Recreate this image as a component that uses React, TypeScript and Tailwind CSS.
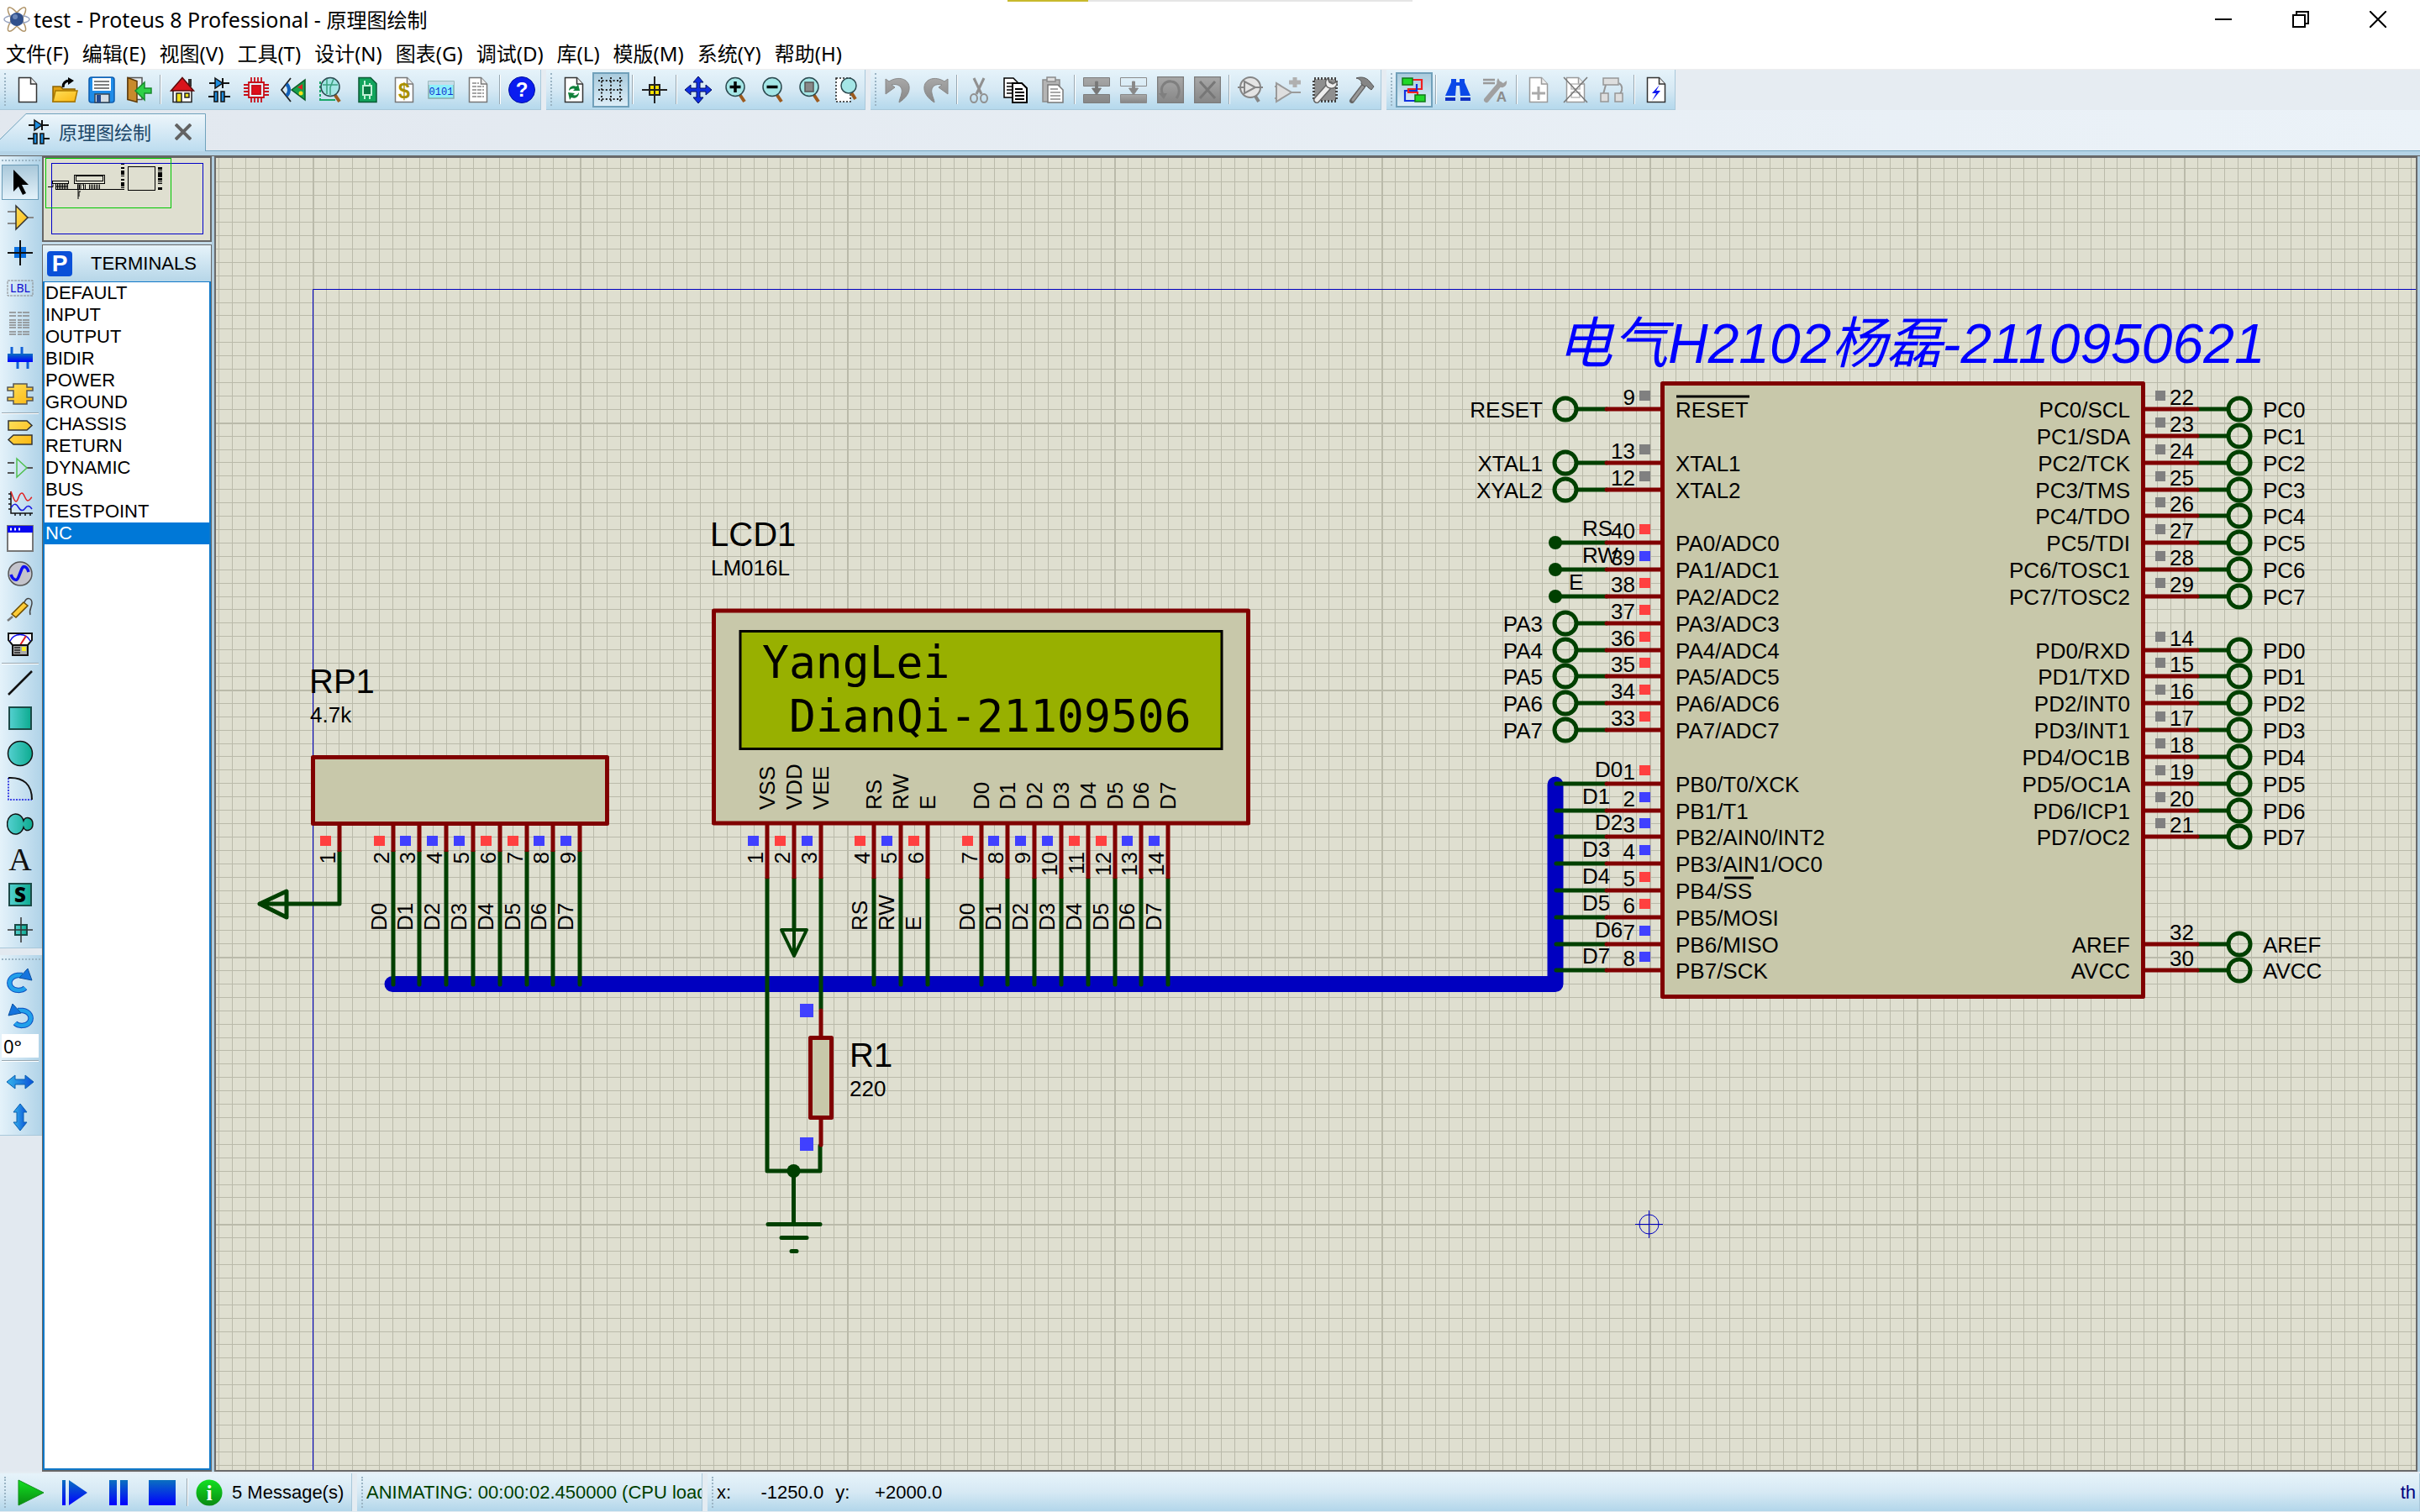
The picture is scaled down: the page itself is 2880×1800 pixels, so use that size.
import React from "react";

/* ---------- shared helpers ---------- */

const UI = "font-['Noto_Sans','Noto_Sans_CJK_SC',sans-serif]";
const ARIAL = "font-['Liberation_Sans','Noto_Sans_CJK_SC',sans-serif]";

type Kids = { children?: React.ReactNode };

const Svg = ({ children }: Kids) => (
  <svg viewBox="0 0 32 32" className="size-8" fill="none" strokeWidth={1.5} aria-hidden="true">
    {children}
  </svg>
);

const Page = ({ stroke = "#333", fill = "#fff" }: { stroke?: string; fill?: string }) => (
  <g>
    <path d="M5.500 1.500h14l7 7.500v21.500h-21z" fill={fill} stroke={stroke} />
    <path d="M19.500 1.500v7.500h7" fill="#eee" stroke={stroke} />
  </g>
);

const Lens = ({ children }: Kids) => (
  <g>
    <path d="M21 21l6 9" stroke="#9c5a1e" strokeWidth={4} />
    <circle cx="16" cy="12.500" r="11" fill="#a4e6e6" stroke="#2c4a50" />
    {children}
  </g>
);

const Grads = () => (
  <svg className="absolute size-0" aria-hidden="true">
    <defs>
      <linearGradient id="teal"><stop offset="0" stopColor="#55d0d0" /><stop offset="1" stopColor="#0cab90" /></linearGradient>
      <linearGradient id="gold" x2="1" y2="1"><stop offset="0" stopColor="#ffdf5a" /><stop offset="1" stopColor="#fbb812" /></linearGradient>
      <linearGradient id="blueV" x2="0" y2="1"><stop offset="0" stopColor="#0a70c0" /><stop offset="1" stopColor="#0000ff" /></linearGradient>
      <linearGradient id="greenV" x2="0" y2="1"><stop offset="0" stopColor="#12e022" /><stop offset="1" stopColor="#0a8a12" /></linearGradient>
      <linearGradient id="sky"><stop offset="0" stopColor="#35b4ea" /><stop offset="1" stopColor="#0a50d8" /></linearGradient>
      <linearGradient id="grayV" x2="0" y2="1"><stop offset="0" stopColor="#a8a8a8" /><stop offset="1" stopColor="#868686" /></linearGradient>
      <linearGradient id="tab" x2="0" y2="1"><stop offset="0" stopColor="#eef6fb" /><stop offset="1" stopColor="#bcdcef" /></linearGradient>
    </defs>
  </svg>
);

/* ---------- toolbar icons ---------- */

const DiodeCap = () => (
  <g stroke="#111" strokeWidth={2}>
    <path d="M4 8h24M20 2v12" />
    <path d="M11 2l9 6-9 6z" fill="#1c8de0" strokeWidth={1.5} />
    <path d="M3 24h7M22 24h7" />
    <path d="M10 18h4v12h-4zM18 18h4v12h-4z" fill="#1c8de0" strokeWidth={1.5} />
  </g>
);

const Undo = () => (
  <path d="M1 3l0 18 11-8-4-3c7-2 14 2 12 10-1 5-3 8-3 11 8-5 13-12 12-19C28 3 16-1 5 6z" fill="url(#grayV)" stroke="#888" strokeWidth={1} />
);

const icons: Record<string, React.ReactNode> = {
  new: <Page />,
  open: (
    <g>
      <path d="M2 12h9l3 3h14v15H2z" fill="#e0a010" stroke="#8a6200" />
      <path d="M2 30l3-13h26l-3 13z" fill="url(#gold)" stroke="#a87800" />
      <path d="M14 13c0-6 3-8 8-8" stroke="#000" strokeWidth={3} />
      <path d="M20 1l7 4-7 5z" fill="#000" />
    </g>
  ),
  save: (
    <g>
      <rect x="1" y="1" width="30" height="30" rx="3" fill="#1e8ce8" stroke="#0d5cae" />
      <rect x="5" y="2" width="22" height="15" fill="#fff" />
      <path d="M7 6h18M7 10h18M7 14h18" stroke="#555" />
      <rect x="8" y="21" width="17" height="10" fill="#d4dde4" stroke="#345" />
      <rect x="10" y="22" width="5" height="9" fill="#234a90" />
    </g>
  ),
  exit: (
    <g>
      <path d="M3 1.500h17v26H3z" fill="#e9eef2" stroke="#555" />
      <path d="M3 1.500l11 4v25l-11-3z" fill="#c88a2c" stroke="#5e3a08" />
      <path d="M31 20h-8v8L12 17 23 7v7h8z" fill="#2fd048" stroke="#18892c" />
    </g>
  ),
  home: (
    <g>
      <path d="M23 3h4v9h-4z" fill="#333" />
      <path d="M5 15h22v15.500H5z" fill="#fff" stroke="#222" />
      <path d="M16 1.500L29.500 17h-27z" fill="#d8141c" stroke="#5c0a0a" />
      <path d="M9 20h6v10.500H9z" fill="#f4e21a" stroke="#222" />
      <path d="M19 20h5v5h-5z" fill="#f4e21a" stroke="#222" />
    </g>
  ),
  schematic: <DiodeCap />,
  chip: (
    <g stroke="#c8101a" strokeWidth={1.800}>
      <path d="M10 1v30M14 1v30M18 1v30M22 1v30M1 10h30M1 14h30M1 18h30M1 22h30" />
      <path d="M7 7h18v18H7z" fill="#e6f2f8" />
      <path d="M11 11h10v10H11z" fill="#e0101a" />
    </g>
  ),
  viewer: (
    <g>
      <path d="M13 2L2 16l11 14" stroke="#222" strokeWidth={1.800} />
      <path d="M8 9c4 4 4 10 0 14" stroke="#1260b8" strokeWidth={4} />
      <path d="M14 16L30 4v24z" fill="#17a04a" stroke="#0a5a28" />
      <path d="M21 13l6-4v7z" fill="#e02020" />
      <circle cx="25" cy="20" r="2.500" fill="#f4e21a" />
    </g>
  ),
  gerber: (
    <g>
      <path d="M4 6v22h16M4 28h18" stroke="#1aa86a" strokeDasharray="3 2" strokeWidth={2} />
      <Lens><path d="M7 10h18M12 3v18M20 3l-4 10v9" stroke="#3aa080" /></Lens>
    </g>
  ),
  pcb: (
    <g>
      <path d="M6 1.500h14l7 7v22H6z" fill="#12a45c" stroke="#0b5a34" />
      <path d="M11 11h10v11H11z" fill="#0b7a44" stroke="#bff0d4" strokeWidth={2} />
      <path d="M13 11V5M19 11V8M13 22v5M19 22v5" stroke="#bff0d4" strokeWidth={2} />
    </g>
  ),
  bom: (
    <g>
      <Page stroke="#777" />
      <text x="16" y="26" fontSize="25" fontWeight="700" fill="#a89000" textAnchor="middle" className={ARIAL}>$</text>
    </g>
  ),
  code: (
    <g>
      <rect x="1" y="6" width="30" height="20" fill="#8ff0fa" stroke="#8aa" />
      <rect x="1" y="6" width="30" height="4" fill="#c8dce8" />
      <text x="16" y="22" fontSize="12" fill="#1030d0" textAnchor="middle" className="font-['Liberation_Mono',monospace]">0101</text>
    </g>
  ),
  notes: (
    <g>
      <Page stroke="#777" />
      <path d="M9 8h8M9 12h14M9 16h14M9 20h14M9 24h14" stroke="#888" strokeDasharray="5 1" />
    </g>
  ),
  help: (
    <g>
      <circle cx="16" cy="16" r="15.500" fill="#0a1cf0" stroke="#0010a0" strokeWidth={1} />
      <text x="16" y="24" fontSize="24" fontWeight="700" fill="#fff" textAnchor="middle" className={ARIAL}>?</text>
    </g>
  ),
  refresh: (
    <g>
      <Page />
      <path d="M10 17c0-5 5-7 9-5l2-3 2 8-8 0 2-2c-3-1-5 0-7 2zM22 19c0 6-5 8-9 6l-2 3-2-9 8 1-2 2c3 1 5 0 7-3z" fill="#10803a" />
    </g>
  ),
  grid: (
    <path d="M1 5h30M1 16h30M1 27h30M5 1v30M16 1v30M27 1v30" stroke="#222" strokeDasharray="2 2.400" strokeWidth={2} />
  ),
  origin: (
    <g stroke="#222" strokeWidth={2}>
      <rect x="10" y="10" width="12" height="12" fill="#f8e000" />
      <path d="M16 0v32M1 16h30" />
    </g>
  ),
  pan: (
    <path d="M16 0l6 7h-4v7h7v-4l7 6-7 6v-4h-7v7h4l-6 7-6-7h4v-7H7v4l-7-6 7-6v4h7V7h-4z" fill="#1030e0" stroke="#000c60" strokeWidth={1} />
  ),
  zoomIn: <Lens><path d="M16 6v13M9.500 12.500h13" stroke="#000" strokeWidth={3.500} /></Lens>,
  zoomOut: <Lens><path d="M9.500 12.500h13" stroke="#000" strokeWidth={3.500} /></Lens>,
  zoomAll: <Lens><rect x="11" y="7" width="10" height="11" fill="#888" stroke="#555" /></Lens>,
  zoomArea: (
    <g>
      <path d="M4 2h17v28H4z" fill="#fff" stroke="#222" strokeDasharray="2 2" />
      <path d="M22 19l5 8" stroke="#9c5a1e" strokeWidth={4} />
      <circle cx="19" cy="11" r="9" fill="#a4e6e6" stroke="#2c4a50" />
    </g>
  ),
  undo: <Undo />,
  redo: <g transform="matrix(-1 0 0 1 32 0)"><Undo /></g>,
  cut: (
    <g stroke="#909090" strokeWidth={2}>
      <path d="M10 2l9 19M22 2l-9 19" strokeWidth={3} />
      <ellipse cx="10" cy="26" rx="4" ry="5" />
      <ellipse cx="22" cy="26" rx="4" ry="5" />
    </g>
  ),
  copy: (
    <g stroke="#000" fill="#fff">
      <path d="M2 2h11l5 5v18H2z" />
      <path d="M5 8h8M5 12h8M5 16h8M5 20h8" />
      <path d="M12 8h11l6 6v17H12z" strokeWidth={2} />
      <path d="M15 15h9M15 19h11M15 23h11M15 27h11" strokeWidth={2} />
    </g>
  ),
  paste: (
    <g stroke="#8a8a8a">
      <rect x="4" y="4" width="20" height="26" fill="#b4b4b4" />
      <rect x="9" y="1" width="10" height="5" fill="#ddd" />
      <path d="M10 10h12l6 6v15H10z" fill="#fff" stroke="#777" />
      <path d="M13 15h9M13 19h12M13 23h12M13 27h12" />
    </g>
  ),
  blockCopy: (
    <g fill="url(#grayV)" stroke="#7c7c7c" strokeWidth={1}>
      <path d="M.500 1.500h31v10h-31zM.500 21.500h31v10h-31z" />
      <path d="M14.500 6h3v8h4l-5.500 8-5.500-8h4z" fill="#777" />
    </g>
  ),
  blockMove: (
    <g fill="url(#grayV)" stroke="#8a8a8a" strokeWidth={1}>
      <path d="M.500 1.500h31v10h-31z" fill="none" />
      <path d="M.500 21.500h31v10h-31z" />
      <path d="M14.500 6h3v8h4l-5.500 8-5.500-8h4z" fill="#888" />
    </g>
  ),
  blockRotate: (
    <g>
      <rect x=".500" y=".500" width="31" height="31" fill="url(#grayV)" stroke="#7c7c7c" />
      <path d="M7 22C2 12 10 5 17 6c9 1 12 12 6 20" stroke="#7f7f7f" strokeWidth={3} />
      <path d="M2 20h10l-4 7z" fill="#7f7f7f" />
    </g>
  ),
  blockDelete: (
    <g>
      <rect x=".500" y=".500" width="31" height="31" fill="url(#grayV)" stroke="#7c7c7c" />
      <path d="M7 6l18 20M25 6L7 26" stroke="#777" strokeWidth={3} />
    </g>
  ),
  pick: (
    <g stroke="#858585" strokeWidth={2}>
      <path d="M20 22l5 8" strokeWidth={4} />
      <circle cx="15" cy="13" r="12" fill="#e4e4e4" />
      <path d="M0 13h8M8 6v14l13-7zM21 13h9" />
    </g>
  ),
  make: (
    <g stroke="#9a9a9a" strokeWidth={2}>
      <path d="M2 8v22l18-11zM0 12h2M0 26h2M20 19h11" fill="#dedede" />
      <path d="M24 1v12M17 7h14" strokeWidth={5} stroke="#b0b0b0" />
    </g>
  ),
  pack: (
    <g>
      <path d="M3 3h26v26H3z" fill="#a8a8a8" stroke="#444" strokeWidth={4} strokeDasharray="2 2" />
      <path d="M4 4h24v24H4z" fill="#8f8f8f" />
      <path d="M22 10L6 28" stroke="#666" strokeWidth={8} strokeLinecap="round" />
      <path d="M22 10L6 28" stroke="#eee" strokeWidth={5} strokeLinecap="round" />
      <path d="M19 2c-4 4-3 11 3 12s9-4 8-8l-5 3-4-2z" fill="#eee" stroke="#666" />
    </g>
  ),
  decompose: (
    <g>
      <path d="M17 12L4 29" stroke="#666" strokeWidth={6} strokeLinecap="round" />
      <path d="M17 12L5 28" stroke="#999" strokeWidth={3} strokeLinecap="round" />
      <path d="M9 2c6-2 12-1 16 4l5 6-3 4-4-3c-1-2-2-2-4-1l-4-3c1-4-2-6-6-7z" fill="#858585" stroke="#555" strokeWidth={1} />
    </g>
  ),
  autoroute: (
    <g strokeWidth={2.200}>
      <path d="M13 4h12v11H9v4" stroke="#f02020" />
      <path d="M19 9v8H5v12h12" stroke="#1030e0" />
      <path d="M9 15v4h11v3" stroke="#f02020" />
      <rect x="2" y="2" width="12" height="8" fill="#20d828" stroke="#117a18" strokeWidth={1.500} />
      <rect x="17" y="22" width="12" height="8" fill="#20d828" stroke="#117a18" strokeWidth={1.500} />
    </g>
  ),
  find: (
    <g fill="#0a48e8">
      <path d="M8 3h6v4h4V3h6v4l7 16H19l-1-12h-4l-1 12H1L8 7z" />
      <path d="M1 25h12v4H1zM19 25h12v4H19z" fill="#1030c0" />
    </g>
  ),
  property: (
    <g>
      <path d="M2 4h14M2 8h14" stroke="#999" strokeWidth={2.500} />
      <path d="M22 9L6 28" stroke="#a0a0a0" strokeWidth={6} strokeLinecap="round" />
      <path d="M20 2c-3 4-2 10 3 11s8-4 7-8l-4 3-4-2z" fill="#a0a0a0" />
      <text x="24" y="30" fontSize="17" fontWeight="700" fill="#8c8c8c" textAnchor="middle" className={ARIAL}>A</text>
    </g>
  ),
  addSheet: (
    <g>
      <Page stroke="#9a9a9a" />
      <path d="M16 12v16M8 20h16" stroke="#aaa" strokeWidth={3} />
    </g>
  ),
  removeSheet: (
    <g>
      <Page stroke="#9a9a9a" />
      <path d="M11 9h10v6H11zM11 19h10v6H11z" stroke="#bbb" />
      <path d="M2 1l28 30M30 1L2 31" stroke="#777" />
    </g>
  ),
  hierarchy: (
    <g stroke="#969696" fill="#dedede">
      <path d="M8 10L5 21M24 8c4 3 4 8 1 13" fill="none" strokeWidth={2} />
      <rect x="5" y="2" width="18" height="8" />
      <rect x="2" y="20" width="9" height="10" />
      <rect x="19" y="20" width="9" height="10" />
    </g>
  ),
  erc: (
    <g>
      <Page />
      <path d="M20 10l-9 10h5l-5 9 10-12h-5z" fill="#1018f0" />
    </g>
  ),
};

type Tool = { id: string; label: string; active?: boolean; off?: boolean } | "sep";
const t = (id: string, label: string, active = false, off = false): Tool => ({ id, label, active, off });

const toolbarGroups: Tool[][] = [
  [
    t("new", "New"), t("open", "Open"), t("save", "Save"), t("exit", "Close"), "sep",
    t("home", "Home page"), t("schematic", "Schematic capture"), t("chip", "PCB layout"), t("viewer", "3D visualizer"),
    t("gerber", "Gerber viewer"), t("pcb", "Design explorer"), t("bom", "Bill of materials"), t("code", "Source code"),
    t("notes", "Project notes"), "sep", t("help", "Help"),
  ],
  [
    t("refresh", "Redraw"), t("grid", "Toggle grid", true), "sep", t("origin", "Origin"), "sep",
    t("pan", "Pan"), t("zoomIn", "Zoom in"), t("zoomOut", "Zoom out"), t("zoomAll", "Zoom all"), t("zoomArea", "Zoom area"),
  ],
  [
    t("undo", "Undo", false, true), t("redo", "Redo", false, true), "sep",
    t("cut", "Cut", false, true), t("copy", "Copy"), t("paste", "Paste", false, true), "sep",
    t("blockCopy", "Block copy", false, true), t("blockMove", "Block move", false, true),
    t("blockRotate", "Block rotate", false, true), t("blockDelete", "Block delete", false, true), "sep",
    t("pick", "Pick parts", false, true), t("make", "Make device", false, true),
    t("pack", "Packaging tool", false, true), t("decompose", "Decompose", false, true),
  ],
  [
    t("autoroute", "Wire autorouter", true), "sep", t("find", "Search"), t("property", "Property assignment", false, true), "sep",
    t("addSheet", "New sheet", false, true), t("removeSheet", "Remove sheet", false, true), t("hierarchy", "Exit to parent", false, true), "sep",
    t("erc", "Electrical rules check"),
  ],
];

const Grip = () => (
  <span className="flex w-[11px] shrink-0 justify-center self-stretch py-1">
    <span className="border-l-2 border-dotted border-[#9ab4c4]" />
  </span>
);

const HGrip = () => <span className="mx-0.5 my-1 block border-t-2 border-dotted border-[#9ab4c4]" />;

const VSep = () => (
  <span className="flex w-2 shrink-0 justify-center self-stretch py-1.5">
    <span className="w-0.5 border-l border-[#98a8b2] bg-white" />
  </span>
);

const Toolbar = () => (
  <div className="flex h-12 shrink-0 gap-1.5 bg-[#e6ecf2]" role="toolbar" aria-label="Main toolbar">
    {toolbarGroups.map((group, i) => (
      <div key={i} className="flex items-center border-r border-b border-[#a9c8da] bg-linear-to-b from-[#e6f3fa] via-[#d6e9f4] to-[#b4d8ec]">
        <Grip />
        {group.map((tool, j) =>
          tool === "sep" ? (
            <VSep key={j} />
          ) : (
            <button
              key={j}
              type="button"
              aria-label={tool.label}
              disabled={tool.off}
              className={
                tool.active
                  ? "flex h-[42px] w-11 items-center justify-center border-2 border-[#70a0ba] bg-linear-to-b from-[#aacbdd] to-[#dcedf7]"
                  : "flex h-[42px] w-11 items-center justify-center"
              }
            >
              <Svg>{icons[tool.id]}</Svg>
            </button>
          ),
        )}
      </div>
    ))}
  </div>
);

/* ---------- left mode palette ---------- */

const modeGroups: [string, React.ReactNode][][] = [
  [
    ["Selection mode", <path d="M8 1v26l6-6 5 10 4-2-5-10h8z" fill="#000" />],
    ["Component mode", <g stroke="#888"><path d="M1 9h10M1 23h10M25 16h7" strokeWidth={2} /><path d="M11 2l14 14-14 14z" fill="url(#gold)" stroke="#333" /></g>],
    ["Junction dot mode", <g><rect x="9" y="9" width="14" height="13" fill="#0a70e0" /><path d="M16 1v30M1 16h30" stroke="#111" strokeWidth={2} /></g>],
    ["Wire label mode", <g><rect x="1" y="7" width="30" height="18" stroke="#888" strokeDasharray="3 1" strokeWidth={1} /><text x="16" y="21" fontSize="14" fill="#1010d0" textAnchor="middle" className={UI}>LBL</text></g>],
    ["Text script mode", <g stroke="#888"><path d="M3 3h26M3 7h26M3 12h26M3 15h26M3 18h26M3 21h26M3 26h26M3 29h26" strokeDasharray="8 2 5 1" /></g>],
    ["Buses mode", <g><path d="M6 2v9M18 2v9M13 19v9M25 19v9" stroke="#1060d8" strokeWidth={3} /><rect x="1" y="10" width="30" height="10" fill="url(#blueV)" /></g>],
    ["Subcircuit mode", <path d="M8 4h16v4h7v4h-7v8h7v4h-7v4H8v-4H1v-4h7v-8H1V8h7z" fill="url(#gold)" stroke="#555" />],
  ],
  [
    ["Terminals mode", <g fill="url(#gold)" stroke="#333"><path d="M2 2h22l6 5.500-6 5.500H2zM30 19H8l-6 5.500L8 30h22z" /></g>],
    ["Device pins mode", <g><path d="M1 10h8M1 22h8M24 16h7" stroke="#555" strokeWidth={2} /><path d="M12 5l12 11-12 11z" stroke="#50c050" /></g>],
    ["Graph mode", <g><path d="M5 2v26h26M2 5h3M2 11h3M2 17h3M2 23h3M10 28v3M16 28v3M22 28v3M28 28v3" stroke="#111" /><path d="M5 2c3 8 4 12 6 12 3 0 3-10 7-10 3 0 4 9 7 9s3-3 5-4" stroke="#e02020" /><path d="M5 22c3-6 6-6 9-1s6 4 8 1 5-4 8 1" stroke="#1818e0" /></g>],
    ["Active popup mode", <g><rect x="1" y="1" width="30" height="30" fill="#fff" stroke="#777" strokeWidth={2} /><rect x="1" y="1" width="30" height="8" fill="#0808f0" /><path d="M4 5h2M9 5h2M14 5h2" stroke="#fff" strokeWidth={3} /></g>],
    ["Generator mode", <g><circle cx="16" cy="16" r="14" fill="#c4c4cc" stroke="#555" /><path d="M5 17c2 6 7 9 9 3l4-10c2-4 6-3 8 4" stroke="#1010f0" strokeWidth={3.500} /></g>],
    ["Probe mode", <g><path d="M1 30l6-5" stroke="#777" strokeWidth={2.500} /><path d="M6 22L20 8l5 4L11 26z" fill="url(#gold)" stroke="#6a4a00" /><path d="M21 8c3-7 9-5 9 1 0 5-4 8-2 14" stroke="#444" /></g>],
    ["Instruments mode", <g><path d="M2 3h28v8l-5 6H7l-5-6z" fill="#fff" stroke="#111" strokeWidth={2} /><path d="M4 12C9 2 23 2 28 12" stroke="#1010f0" /><path d="M16 17l7-11" stroke="#e02020" strokeWidth={2} /><rect x="7" y="17" width="18" height="12" fill="#a8a8a8" stroke="#111" strokeWidth={2} /><path d="M9 20h7M9 23h7M9 26h7" stroke="#222" /><path d="M18 19h5v5h-5z" fill="#f8f020" /></g>],
  ],
  [
    ["2D line", <path d="M2 30L30 2" stroke="#111" strokeWidth={2.500} />],
    ["2D box", <rect x="3" y="3" width="26" height="26" fill="url(#teal)" stroke="#1b4a46" strokeWidth={2} />],
    ["2D circle", <circle cx="16" cy="16" r="14.500" fill="url(#teal)" stroke="#111" />],
    ["2D arc", <g><path d="M2 3v26h28" stroke="#1010e0" strokeDasharray="2 1.500" /><path d="M2 3c18-1 28 8 28 26" stroke="#111" strokeWidth={2} /></g>],
    ["2D path", <path d="M20 12A10 12 0 1 0 20 20C22 26 31 24 31 16S22 6 20 12z" fill="url(#teal)" stroke="#111" />],
    ["2D text", <text x="16" y="29" fontSize="38" fill="#111" textAnchor="middle" className="font-['Liberation_Serif',serif]">A</text>],
    ["2D symbol", <g><rect x="3" y="3" width="26" height="26" fill="url(#teal)" stroke="#1b4a46" strokeWidth={2} /><text x="16" y="25" fontSize="24" fontWeight="900" fill="#000" textAnchor="middle" className={UI}>S</text></g>],
    ["2D marker", <g><rect x="10" y="10" width="14" height="12" fill="url(#teal)" stroke="#1b4a46" strokeWidth={2} /><path d="M17 1v30M1 16h30" stroke="#333" /></g>],
  ],
];

const RotateIcon = () => (
  <g>
    <path d="M22 24c-4 4-13 4-17-1-4-6 0-13 8-14l6 0" stroke="#0a50c0" strokeWidth={6.500} />
    <path d="M22 24c-4 4-13 4-17-1-4-6 0-13 8-14l6 0" stroke="#22a0ea" strokeWidth={4.500} />
    <path d="M25 1l5 14-15-3z" fill="#1474de" stroke="#0a50a0" strokeWidth={1} />
  </g>
);

const PaletteButton = ({ label, active, children }: { label: string; active?: boolean } & Kids) => (
  <button
    type="button"
    aria-label={label}
    className={
      active
        ? "flex h-[42px] w-11 items-center justify-center border border-[#6c9db8] bg-linear-to-b from-[#a9c8da] to-[#e4f2fa]"
        : "flex h-[42px] w-11 items-center justify-center"
    }
  >
    <Svg>{children}</Svg>
  </button>
);

const HSep = () => (
  <span className="flex h-1 w-11 flex-col justify-center">
    <span className="h-0.5 border-t border-[#98a8b2] bg-white" />
  </span>
);

const Palette = () => (
  <div className="flex w-[50px] shrink-0 flex-col gap-2 bg-[#e2e9f0]">
    <div className="border-b border-[#a9c8da] bg-linear-to-r from-[#e4f2fa] to-[#b0d3e8]">
      <HGrip />
      <div className="flex flex-col items-start pl-0.5">
        {modeGroups.map((group, i) => (
          <React.Fragment key={i}>
            {i > 0 && <HSep />}
            {group.map(([label, icon], j) => (
              <PaletteButton key={label} label={label} active={i === 0 && j === 0}>
                {icon}
              </PaletteButton>
            ))}
          </React.Fragment>
        ))}
      </div>
    </div>
    <div className="border-b border-[#a9c8da] bg-linear-to-r from-[#e4f2fa] to-[#b0d3e8]">
      <HGrip />
      <div className="flex flex-col items-start pl-0.5">
        <PaletteButton label="Rotate clockwise"><RotateIcon /></PaletteButton>
        <PaletteButton label="Rotate anti-clockwise"><g transform="matrix(-1 0 0 1 32 0)"><RotateIcon /></g></PaletteButton>
        <input aria-label="Angle" defaultValue="0°" className={`h-7 w-11 bg-white px-0.5 text-[22px] text-black ${UI}`} />
        <div className="py-0.5"><HSep /></div>
        <PaletteButton label="Mirror horizontally"><path d="M0 16l10-8v5h12V8l10 8-10 8v-5H10v5z" fill="url(#sky)" stroke="#0a60b0" strokeWidth={1} /></PaletteButton>
        <PaletteButton label="Mirror vertically"><path d="M16 0l8 10h-4v12h4l-8 10-8-10h4V10H8z" fill="url(#sky)" stroke="#0a60b0" strokeWidth={1} /></PaletteButton>
      </div>
    </div>
  </div>
);

/* ---------- overview and terminal list ---------- */

const Overview = () => (
  <svg className="h-[102px] w-full shrink-0 border-2 border-[#666] bg-[#dfdfd0]" viewBox="52 188 198 98" preserveAspectRatio="xMinYMin" fill="none" role="img" aria-label="Sheet overview">
    <rect x="61.500" y="194.500" width="180" height="84" stroke="#0000c8" />
    <g stroke="#000">
      <rect x="152.500" y="198.500" width="32" height="28" />
      <rect x="88.500" y="208.500" width="36" height="10" />
      <rect x="90.500" y="209.500" width="32" height="6" />
      <rect x="62.500" y="215.500" width="19" height="3" />
      <path d="M57 222.500h6v-3M66 225.500h82M66 222h14M93 219v18M96 219v6M99 219v2M96 228h-2v6" />
      <path d="M66 221.500h15" strokeWidth={7} strokeDasharray="1 1" />
      <path d="M92 222.500h4M99 222.500h4M106 222.500h14" strokeWidth={6} strokeDasharray="1 1" />
      <path d="M146 195v31" strokeWidth={4} strokeDasharray="1 3 2 2 5 1" />
      <path d="M190.500 199v20M190.500 223v4" strokeWidth={5} strokeDasharray="3 1 1 1 6 1" />
    </g>
    <rect x="54.500" y="188.500" width="149" height="59" stroke="#00c800" />
  </svg>
);

const terminals = ["DEFAULT", "INPUT", "OUTPUT", "BIDIR", "POWER", "GROUND", "CHASSIS", "RETURN", "DYNAMIC", "BUS", "TESTPOINT", "NC"];

const SidePanel = () => (
  <div className={`flex w-[202px] shrink-0 flex-col gap-[3px] bg-[#c4dcea] ${ARIAL}`}>
    <Overview />
    <div className="flex flex-1 flex-col border-x border-t border-b-2 border-[#666]">
      <div className="flex h-[43px] shrink-0 items-center gap-[22px] bg-linear-to-b from-[#e6f3fa] to-[#b6d6e8] pl-[5px]">
        <button type="button" aria-label="Pick devices" className="flex size-[30px] items-center justify-center rounded bg-[#0a50d8] text-[28px] leading-none font-semibold text-white">
          P
        </button>
        <span className="text-[22px] text-black">TERMINALS</span>
      </div>
      <ul role="listbox" aria-label="Terminals" className="flex-1 border-2 border-t border-[#1078c8] bg-white text-[22px] leading-[26px] text-black">
        {terminals.map((name) => (
          <li
            key={name}
            role="option"
            aria-selected={name === "NC"}
            className="px-px aria-selected:bg-[#0078d7] aria-selected:text-white"
          >
            {name}
          </li>
        ))}
      </ul>
    </div>
  </div>
);

/* ---------- schematic ---------- */

const PITCH = 31.82;
const RED = "#ff4040";
const BLUE = "#4040ff";
const GRAY = "#808080";
const WIRE = "#004000";
const PIN = "#800000";
const shade: Record<string, string> = { r: RED, b: BLUE, g: GRAY };

const gridX = Array.from({ length: 240 }, (_, i) => i - 7);
const gridY = Array.from({ length: 150 }, (_, i) => i);

const Grid = () => (
  <g stroke="#babaaa" shapeRendering="crispEdges">
    {gridX.map((i) => {
      const x = Math.round(371.6 + (i * PITCH) / 2) + 0.5;
      return <line key={i} x1={x} x2={x} y1={180} y2={2600} strokeWidth={i % 20 === 0 ? 2 : 1} />;
    })}
    {gridY.map((i) => {
      const y = Math.round(184.5 + (i * PITCH) / 2) + 0.5;
      return <line key={i} x1={250} x2={4200} y1={y} y2={y} strokeWidth={i % 20 === 0 ? 2 : 1} />;
    })}
  </g>
);

const Up = ({ x, y, end, children }: { x: number; y: number; end?: boolean } & Kids) => (
  <text transform={`translate(${x} ${y}) rotate(-90)`} textAnchor={end ? "end" : "start"}>
    {children}
  </text>
);

type VPin = { x: number; n: number; c: string; net?: string; name?: string };

const rpPins: VPin[] = [
  { x: 404, n: 1, c: "r" },
  ...["r", "b", "b", "b", "r", "r", "b", "b"].map((c, i) => ({ x: Math.round(467.5 + i * PITCH), n: i + 2, c, net: `D${i}` })),
];

const lcdSlots = [0, 1, 2, 4, 5, 6, 8, 9, 10, 11, 12, 13, 14, 15];
const lcdNames = ["VSS", "VDD", "VEE", "RS", "RW", "E", "D0", "D1", "D2", "D3", "D4", "D5", "D6", "D7"];
const lcdPins: VPin[] = lcdSlots.map((s, i) => ({
  x: Math.round(913 + s * PITCH),
  n: i + 1,
  c: "brbrbrrbbbrrbb"[i],
  name: lcdNames[i],
  net: i > 2 ? lcdNames[i] : undefined,
}));

const VPins = ({ pins, redEnd }: { pins: VPin[]; redEnd: number }) => (
  <g>
    {pins.map((p) => (
      <g key={p.n}>
        {p.net && <path d={`M${p.x} ${redEnd}V1172`} stroke={WIRE} />}
        <path d={`M${p.x} 981V${redEnd}`} stroke={PIN} strokeLinecap="butt" />
        <rect x={p.x - 23} y={995} width={13} height={12} fill={shade[p.c]} />
        <Up x={p.x - 5} y={1014} end>{p.n}</Up>
        {p.net && <Up x={p.x - 8} y={1108}>{p.net}</Up>}
        {p.name && <Up x={p.x + 9} y={964}>{p.name}</Up>}
      </g>
    ))}
  </g>
);

type HPin = { k: number; n: number; name: string; c?: string; term?: string; net?: string; netX?: number; over?: [number, number] };

const leftPins: HPin[] = [
  { k: 0, n: 9, name: "RESET", c: "g", term: "RESET", over: [1995, 2082] },
  { k: 2, n: 13, name: "XTAL1", c: "g", term: "XTAL1" },
  { k: 3, n: 12, name: "XTAL2", c: "g", term: "XYAL2" },
  { k: 5, n: 40, name: "PA0/ADC0", c: "r", net: "RS", netX: 1883 },
  { k: 6, n: 39, name: "PA1/ADC1", c: "b", net: "RW", netX: 1883 },
  { k: 7, n: 38, name: "PA2/ADC2", c: "r", net: "E", netX: 1867 },
  ...[3, 4, 5, 6, 7].map((i) => ({ k: 5 + i, n: 40 - i, name: `PA${i}/ADC${i}`, c: "r", term: `PA${i}` })),
];

const busPins: HPin[] = ["PB0/T0/XCK", "PB1/T1", "PB2/AIN0/INT2", "PB3/AIN1/OC0", "PB4/SS", "PB5/MOSI", "PB6/MISO", "PB7/SCK"].map(
  (name, i) => ({
    k: 14 + i,
    n: i + 1,
    name,
    c: "rbbbrrbb"[i],
    net: `D${i}`,
    netX: i === 0 || i === 2 || i === 6 ? 1898 : 1883,
    over: i === 4 ? ([2052, 2087] as [number, number]) : undefined,
  }),
);

const rightPins: HPin[] = [
  ...["SCL", "SDA", "TCK", "TMS", "TDO", "TDI", "TOSC1", "TOSC2"].map((s, i) => ({ k: i, n: 22 + i, name: `PC${i}/${s}`, c: "g", term: `PC${i}` })),
  ...["RXD", "TXD", "INT0", "INT1", "OC1B", "OC1A", "ICP1", "OC2"].map((s, i) => ({ k: 9 + i, n: 14 + i, name: `PD${i}/${s}`, c: "g", term: `PD${i}` })),
  { k: 20, n: 32, name: "AREF", term: "AREF" },
  { k: 21, n: 30, name: "AVCC", term: "AVCC" },
];

const rowY = (k: number) => Math.round(487.2 + k * PITCH);

const LeftPin = ({ p, bus }: { p: HPin; bus?: boolean }) => {
  const y = rowY(p.k);
  return (
    <g>
      <path d={`M${p.term ? 1878 : 1852} ${y}H1912`} stroke={WIRE} />
      <path d={`M1912 ${y}H1978`} stroke={PIN} />
      {p.term && <circle cx={1863} cy={y} r={13} stroke={WIRE} />}
      {!p.term && !bus && <circle cx={1851} cy={y} r={8} fill={WIRE} />}
      {p.term && <text x={1836} y={y + 10} textAnchor="end">{p.term}</text>}
      {p.net && <text x={p.netX} y={y - 8}>{p.net}</text>}
      <text x={1946} y={y - 5} textAnchor="end">{p.n}</text>
      {p.c && <rect x={1951} y={y - 22} width={13} height={12} fill={shade[p.c]} />}
      <text x={1994} y={y + 10}>{p.name}</text>
      {p.over && <path d={`M${p.over[0]} ${y - 15}H${p.over[1]}`} stroke="#000" strokeWidth={3} strokeLinecap="butt" />}
    </g>
  );
};

const RightPin = ({ p }: { p: HPin }) => {
  const y = rowY(p.k);
  return (
    <g>
      <path d={`M2616 ${y}H2650`} stroke={WIRE} />
      <path d={`M2553 ${y}H2615`} stroke={PIN} />
      <circle cx={2665} cy={y} r={13} stroke={WIRE} />
      <text x={2535} y={y + 10} textAnchor="end">{p.name}</text>
      {p.c && <rect x={2565} y={y - 22} width={12} height={12} fill={shade[p.c]} />}
      <text x={2582} y={y - 5}>{p.n}</text>
      <text x={2693} y={y + 10}>{p.term}</text>
    </g>
  );
};

const Schematic = () => (
  <div className="relative min-w-0 flex-1 overflow-hidden border-2 border-[#6a6a6a] bg-[#dfdfd0]">
    <svg className={`absolute inset-0 size-full ${ARIAL}`} fill="none" role="img" aria-label="Schematic sheet">
      <g transform="translate(-257 -188)" className="[&_text]:fill-black">
        <Grid />
        <path d="M372.500 2600V344.500H4200" stroke="#0000c0" strokeWidth={1} />

        <path d="M467 1171.500H1851V934" stroke="#0000c0" strokeWidth={19} strokeLinecap="round" strokeLinejoin="round" />

        <g strokeWidth={5} strokeLinecap="round" strokeLinejoin="round" fontSize={26}>
          {/* resistor pack */}
          <rect x={372.500} y={901.500} width={350} height={79} fill="#c8c8aa" stroke={PIN} />
          <path d="M404 1014V1076H309M341 1061V1092L309 1076z" stroke={WIRE} />
          <VPins pins={rpPins} redEnd={1014} />

          {/* display module */}
          <rect x={849.500} y={727} width={636} height={253} fill="#c8c8aa" stroke={PIN} />
          <rect x={881} y={751.500} width={573} height={140} fill="#98b000" stroke="#000" strokeWidth={3} strokeLinejoin="miter" />
          <path d="M913 1046V1394H976V1364M977 1046V1201M945 1046V1107" stroke={WIRE} />
          <path d="M930 1107H960L945 1138zM945 1107V1138" stroke={WIRE} strokeWidth={4} />
          <VPins pins={lcdPins} redEnd={1046} />

          {/* resistor and ground */}
          <path d="M977 1203V1236M977 1330V1363" stroke={PIN} />
          <rect x={964.500} y={1235.500} width={25} height={95} fill="#c8c8aa" stroke={PIN} />
          <rect x={952} y={1195} width={16} height={16} fill={BLUE} />
          <rect x={952} y={1354} width={16} height={16} fill={BLUE} />
          <circle cx={944.500} cy={1394} r={8} fill={WIRE} />
          <path d="M944.500 1394V1457M914 1457.500H976M930 1473.500H960M942 1489.500H948" stroke={WIRE} />

          {/* microcontroller */}
          <rect x={1978.500} y={456.500} width={572} height={730} fill="#c8c8aa" stroke={PIN} />
          {leftPins.map((p) => <LeftPin key={p.n} p={p} />)}
          {busPins.map((p) => <LeftPin key={p.n} p={p} bus />)}
          {rightPins.map((p) => <RightPin key={p.n} p={p} />)}

          <text x={369} y={860}>4.7k</text>
          <text x={846} y={685}>LM016L</text>
          <text x={1011} y={1305}>220</text>
        </g>

        <g fontSize={40}>
          <text x={368} y={825}>RP1</text>
          <text x={845} y={650}>LCD1</text>
          <text x={1011} y={1270}>R1</text>
        </g>

        <g fontSize={53} className="font-['DejaVu_Sans_Mono',monospace]">
          <text x={907} y={807}>YangLei</text>
          <text x={939} y={871}>DianQi-21109506</text>
        </g>

        <g stroke="#0000c0" strokeWidth={1}>
          <circle cx={1962.500} cy={1457.500} r={11.500} />
          <path d="M1946 1457.500h33M1962.500 1441v33" />
        </g>
      </g>
      <text x={1596} y={244} fontSize={66} fill="#0000ff" className="italic">电气H2102杨磊-2110950621</text>
    </svg>
  </div>
);

/* ---------- title, menu, tab and status bars ---------- */

const menus = ["文件(F)", "编辑(E)", "视图(V)", "工具(T)", "设计(N)", "图表(G)", "调试(D)", "库(L)", "模版(M)", "系统(Y)", "帮助(H)"];

const TitleBar = () => (
  <header className="relative flex h-[46px] shrink-0 items-center justify-between bg-white pr-1 pl-1">
    <div className="absolute inset-x-0 top-0 flex justify-center">
      <span className="h-0.5 w-24 bg-[#c8b92c]" />
      <span className="h-0.5 w-[386px] bg-[#e5e5e5]" />
    </div>
    <div className="flex items-center gap-1">
      <svg viewBox="0 0 32 32" className="size-8" fill="none" aria-hidden="true">
        <g stroke="#b09468" strokeWidth={1.500}>
          <ellipse cx="16" cy="16" rx="5" ry="17" transform="rotate(35 16 16)" />
          <ellipse cx="16" cy="16" rx="5" ry="17" transform="rotate(-35 16 16)" />
          <ellipse cx="16" cy="16" rx="15" ry="5" stroke="#98a4c0" />
        </g>
        <circle cx="16" cy="16" r="8" fill="#30508c" />
        <circle cx="14" cy="13" r="3" fill="#6a86b8" />
      </svg>
      <h1 className="text-2xl leading-8 whitespace-pre text-black">
        <span className="text-[25px]">test - Proteus 8 Professional - </span>原理图绘制
      </h1>
    </div>
    <div className="flex">
      <button type="button" aria-label="Minimize" className="flex h-11 w-[92px] items-center justify-center">
        <svg viewBox="0 0 20 20" className="size-5" stroke="#000" strokeWidth={2}><path d="M0 10h20" /></svg>
      </button>
      <button type="button" aria-label="Restore" className="flex h-11 w-[92px] items-center justify-center">
        <svg viewBox="0 0 20 20" className="size-5" stroke="#000" strokeWidth={2} fill="none"><path d="M1 5h14v14H1zM5 5V1h14v14h-4" /></svg>
      </button>
      <button type="button" aria-label="Close" className="flex h-11 w-[92px] items-center justify-center">
        <svg viewBox="0 0 20 20" className="size-5" stroke="#000" strokeWidth={2}><path d="M0 0l20 20M20 0L0 20" /></svg>
      </button>
    </div>
  </header>
);

const MenuBar = () => (
  <nav className="flex h-[37px] shrink-0 items-center gap-4 border-b border-[#eee] bg-white pl-[7px]">
    {menus.map((m) => (
      <button key={m} type="button" className="text-2xl leading-9 text-black">{m}</button>
    ))}
  </nav>
);

const TabBar = () => (
  <div className="h-[55px] shrink-0 border-b border-[#666] bg-[#b4d3e6]">
    <div className="flex h-[49px] items-end border-b border-[#78a8c2] bg-linear-to-r from-[#e2e8ef] to-[#ebf2f8]">
      <div className="relative flex h-11 w-[245px] items-center gap-2 pl-[30px]">
        <svg viewBox="0 0 245 45" className="absolute inset-0 h-[45px] w-full" fill="none" aria-hidden="true">
          <path d="M0 31L31 .500H244.500V45H0z" fill="url(#tab)" />
          <path d="M0 31L31 .500H244.500V45" stroke="#70a2bc" />
        </svg>
        <span className="relative"><Svg><DiodeCap /></Svg></span>
        <span className="relative text-[22px] text-[#1c4668]">原理图绘制</span>
        <button type="button" aria-label="Close tab" className="relative ml-5">
          <svg viewBox="0 0 20 20" className="size-5" stroke="#636363" strokeWidth={4}><path d="M1 1l18 18M19 1L1 19" /></svg>
        </button>
      </div>
    </div>
  </div>
);

const barFill = "border-r border-[#a9c8da] bg-linear-to-b from-[#e6f3fa] via-[#d6e9f4] to-[#b2d6ea]";

const StatusBar = () => (
  <footer className={`flex h-12 shrink-0 gap-1.5 border-t-2 border-b border-[#e4ecf2] bg-[#e4ecf2] text-[22px] text-black ${ARIAL}`}>
    <div className={`flex w-[419px] shrink-0 items-center ${barFill}`}>
      <Grip />
      <button type="button" aria-label="Run" className="flex w-[52px] justify-center"><Svg><path d="M1 1l30 15L1 31z" fill="url(#greenV)" stroke="#109018" strokeWidth={1} /></Svg></button>
      <button type="button" aria-label="Step" className="flex w-[52px] justify-center"><Svg><path d="M1 1h4v30H1zM9 1l22 15L9 31z" fill="url(#blueV)" /></Svg></button>
      <button type="button" aria-label="Pause" className="flex w-[52px] justify-center"><Svg><path d="M5 1h9v30H5zM18 1h9v30h-9z" fill="url(#blueV)" /></Svg></button>
      <button type="button" aria-label="Stop" className="flex w-[52px] justify-center"><Svg><path d="M0 1h32v30H0z" fill="url(#blueV)" /></Svg></button>
      <VSep />
      <button type="button" className="flex items-center gap-[11px] pl-1.5 whitespace-nowrap">
        <Svg>
          <circle cx="16" cy="16" r="15.500" fill="url(#greenV)" />
          <text x="16" y="25" fontSize="26" fontWeight="700" fill="#fff" textAnchor="middle" className="font-['Liberation_Serif',serif]">i</text>
        </Svg>
        5 Message(s)
      </button>
    </div>
    <div className={`flex w-[411px] shrink-0 items-center overflow-hidden ${barFill}`}>
      <Grip />
      <p className="min-w-0 overflow-hidden whitespace-nowrap text-[#004000]">ANIMATING: 00:00:02.450000 (CPU load</p>
    </div>
    <div className={`flex flex-1 items-center ${barFill}`}>
      <Grip />
      <dl className="flex flex-1 items-center gap-3.5">
        <dt>x:</dt>
        <dd className="w-24 text-right">-1250.0</dd>
        <dt>y:</dt>
        <dd className="w-24 text-right">+2000.0</dd>
      </dl>
      <span className="pr-1 text-[#000080]">th</span>
    </div>
  </footer>
);

export default function App() {
  return (
    <div className={`flex h-screen flex-col overflow-hidden bg-[#e2e9f0] ${UI}`}>
      <Grads />
      <TitleBar />
      <MenuBar />
      <Toolbar />
      <TabBar />
      <main className="flex min-h-0 flex-1 gap-[3px] bg-[#b0cddf] pr-[3px]">
        <div className="flex">
          <Palette />
          <SidePanel />
        </div>
        <Schematic />
      </main>
      <StatusBar />
    </div>
  );
}
